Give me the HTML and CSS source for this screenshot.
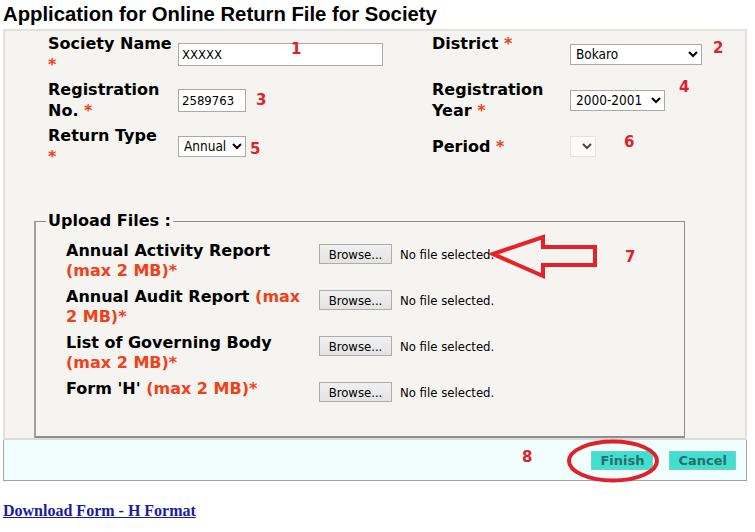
FILE: index.html
```html
<!DOCTYPE html>
<html lang="en">

<head>
    <meta charset="UTF-8">
    <meta name="viewport" content="width=device-width, initial-scale=1.0">
    <title>Online Return File for Society</title>
    <link rel="stylesheet" href="styles.css">
</head>

<body>
    <div class="sheet">
        <h1 class="page-title">Application for Online Return File for Society</h1>

        <div class="panel">
            <!-- society details -->
            <div class="form-grid">
                <label class="field-label">Society Name <span class="req">*</span></label>
                <div class="field"><input type="text" class="text-input society" value="XXXXX"></div>
                <label class="field-label">District <span class="req">*</span></label>
                <div class="field"><select class="select district"><option>Bokaro</option></select></div>

                <label class="field-label">Registration No. <span class="req">*</span></label>
                <div class="field"><input type="text" class="text-input reg-no" value="2589763"></div>
                <label class="field-label">Registration Year <span class="req">*</span></label>
                <div class="field"><select class="select reg-year"><option>2000-2001</option></select></div>

                <label class="field-label">Return Type<br><span class="req">*</span></label>
                <div class="field"><select class="select return-type"><option>Annual</option></select></div>
                <label class="field-label middle">Period <span class="req">*</span></label>
                <div class="field"><select class="select period" disabled></select></div>
            </div>

            <!-- upload files -->
            <fieldset class="uploads">
                <legend>Upload Files :</legend>
                <div class="upload-grid">
                    <div class="upload-label">Annual Activity Report <span class="limit">(max 2 MB)*</span></div>
                    <div class="file-field"><button class="browse-btn">Browse...</button><span class="file-name">No file selected.</span></div>

                    <div class="upload-label">Annual Audit Report <span class="limit">(max 2 MB)*</span></div>
                    <div class="file-field"><button class="browse-btn">Browse...</button><span class="file-name">No file selected.</span></div>

                    <div class="upload-label">List of Governing Body <span class="limit">(max 2 MB)*</span></div>
                    <div class="file-field"><button class="browse-btn">Browse...</button><span class="file-name">No file selected.</span></div>

                    <div class="upload-label">Form 'H' <span class="limit">(max 2 MB)*</span></div>
                    <div class="file-field"><button class="browse-btn">Browse...</button><span class="file-name">No file selected.</span></div>
                </div>
            </fieldset>
        </div>

        <div class="action-bar">
            <button class="action-btn">Finish</button>
            <button class="action-btn">Cancel</button>
        </div>

        <p class="download"><a href="#">Download Form - H Format</a></p>

        <!-- annotation marks drawn over the screenshot -->
        <span class="mark m1">1</span>
        <span class="mark m2">2</span>
        <span class="mark m3">3</span>
        <span class="mark m4">4</span>
        <span class="mark m5">5</span>
        <span class="mark m6">6</span>
        <span class="mark m7">7</span>
        <span class="mark m8">8</span>

        <svg class="arrow-mark" width="110" height="46" viewBox="0 0 110 46">
            <polygon points="4,20 54,3 54,13 106,13 106,31 54,31 54,42" fill="none" stroke="#e8202a" stroke-width="4" stroke-linejoin="miter"/>
        </svg>
        <svg class="ring-mark" width="96" height="46" viewBox="0 0 96 46">
            <ellipse cx="48" cy="23" rx="44" ry="19.5" fill="none" stroke="#e0202a" stroke-width="4"/>
        </svg>
    </div>
</body>

</html>
```

FILE: styles.css
```css
/* page */
body {
    margin: 0;
    background: #fff;
    color: #000;
    font-family: 'DejaVu Sans', Verdana, sans-serif;
}

.sheet {
    position: relative;
    padding: 0 3px;
}

.page-title {
    margin: 0 0 4px;
    padding-top: 3px;
    font-family: 'Liberation Sans', Arial, sans-serif;
    font-size: 20.3px;
    line-height: 22px;
    font-weight: bold;
}

/* main form panel */
.panel {
    width: 744px;
    box-sizing: border-box;
    background: #f6f4f0;
    border: 2px solid #e3e1db;
    border-bottom-color: #dcdad4;
    padding-top: 2px;
}

.form-grid {
    display: grid;
    grid-template-columns: 130px 254px 138px 1fr;
    grid-auto-rows: 42px;
    row-gap: 4px;
    padding-left: 43px;
}

.field-label {
    font-size: 16px;
    font-weight: bold;
    line-height: 21px;
    align-self: start;
    padding-right: 5px;
}

.field-label.middle {
    align-self: center;
}

.req {
    color: #f2401a;
}

.field {
    display: flex;
    align-items: center;
}

.text-input {
    height: 23px;
    box-sizing: border-box;
    border: 1px solid #a9a9a9;
    background: #fff;
    padding: 0 3px;
    font-family: 'DejaVu Sans Condensed', 'DejaVu Sans', sans-serif;
    font-size: 13px;
    color: #000;
}

.society { width: 205px; }
.reg-no { width: 68px; }

.select {
    height: 21px;
    box-sizing: border-box;
    border: 1px solid #a9a9a9;
    border-radius: 0;
    background: #fff;
    font-family: 'DejaVu Sans Condensed', 'DejaVu Sans', sans-serif;
    font-size: 13.5px;
    color: #000;
    padding: 0 0 0 1px;
}

.district { width: 132px; }
.reg-year { width: 95px; }
.return-type { width: 68px; }

.period {
    width: 26px;
    border-color: #dcdcdc;
}

/* uploads box */
.uploads {
    width: 651px;
    box-sizing: border-box;
    margin: 45px 0 0 29px;
    padding: 11px 0 34px 0;
    border: 1px solid #8e8e8e;
    border-bottom: 2px solid #8e8e8e;
    border-left: 2px solid #a0a0a0;
}

.uploads legend {
    margin-left: 10px;
    padding: 0 2px;
    font-size: 16px;
    font-weight: bold;
    line-height: 18px;
}

.upload-grid {
    display: grid;
    grid-template-columns: 253px 1fr;
    row-gap: 6px;
    padding-left: 30px;
}

.upload-label {
    font-size: 16px;
    font-weight: bold;
    line-height: 20px;
    padding-right: 8px;
}

.limit {
    color: #f2401a;
}

.file-field {
    display: flex;
    align-items: center;
    gap: 8px;
    margin-top: 3px;
    align-self: start;
}

.browse-btn {
    width: 73px;
    height: 20px;
    padding: 0;
    border: 1px solid #acacac;
    border-radius: 0;
    background: linear-gradient(#f0f0f0, #e3e3e3);
    font-family: 'DejaVu Sans Condensed', 'DejaVu Sans', sans-serif;
    font-size: 13px;
    color: #000;
}

.file-name {
    font-family: 'DejaVu Sans Condensed', 'DejaVu Sans', sans-serif;
    font-size: 13px;
}

/* bottom buttons */
.action-bar {
    width: 744px;
    height: 41px;
    box-sizing: border-box;
    background: #f0fffe;
    border: 1px solid #a3a3a3;
    border-top: none;
    display: flex;
    justify-content: flex-end;
    align-items: center;
    gap: 16px;
    padding-right: 10px;
}

.action-btn {
    height: 19px;
    padding: 0 8px;
    border: 1px solid #86c9c2;
    border-radius: 0;
    background: #40e0d0;
    color: #2e6b6b;
    font-family: 'DejaVu Sans', Verdana, sans-serif;
    font-size: 13px;
    font-weight: bold;
}

.download {
    margin: 21px 0 0;
    font-family: 'Liberation Serif', 'Times New Roman', serif;
    font-size: 16px;
    font-weight: bold;
}

.download a {
    color: #1a1aa6;
}

/* red annotations */
.mark {
    position: absolute;
    color: #e0202a;
    font-size: 15px;
    font-weight: bold;
    line-height: 15px;
}

.m1 { left: 291px; top: 42px; }
.m2 { left: 713px; top: 41px; }
.m3 { left: 256px; top: 93px; }
.m4 { left: 679px; top: 80px; }
.m5 { left: 250px; top: 142px; }
.m6 { left: 624px; top: 135px; }
.m7 { left: 625px; top: 250px; }
.m8 { left: 522px; top: 450px; }

.arrow-mark {
    position: absolute;
    left: 489px;
    top: 234px;
}

.ring-mark {
    position: absolute;
    left: 565px;
    top: 438px;
}
```
